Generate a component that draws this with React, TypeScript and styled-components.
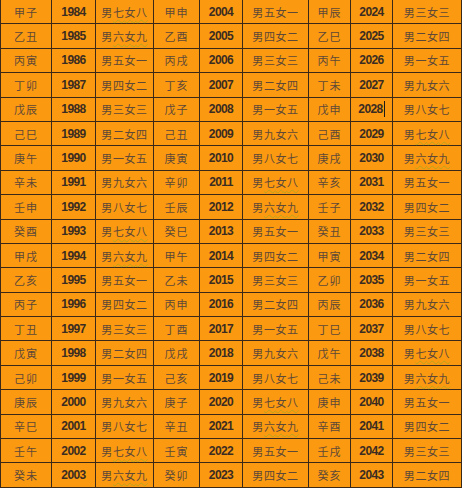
import React from "react";
import styled, { createGlobalStyle } from "styled-components";

const STEMS = "甲乙丙丁戊己庚辛壬癸";
const BRANCHES = "子丑寅卯辰巳午未申酉戌亥";
const PAIRS = [
  ["七", "八"],
  ["六", "九"],
  ["五", "一"],
  ["四", "二"],
  ["三", "三"],
  ["二", "四"],
  ["一", "五"],
  ["九", "六"],
  ["八", "七"],
];

const ganzhi = (year: number) =>
  STEMS[(year - 4) % 10] + BRANCHES[(year - 4) % 12];

type CellKind = "stem" | "year" | "ratio";

export default function App() {
  const rows = Array.from({ length: 20 }, (_, i) => i);
  const blocks = [1984, 2004, 2024];

  return (
    <>
      <GlobalStyle />
      <Table>
        {rows.map((i) =>
          blocks.map((start) => {
            const year = start + i;
            const [m, f] = PAIRS[(year - 1984) % 9];
            const squiggle = m === "七" || m === "六";
            return (
              <React.Fragment key={year}>
                <Cell $kind="stem">{ganzhi(year)}</Cell>
                <Cell $kind="year">
                  {year}
                  {year === 2028 && <Caret />}
                </Cell>
                <Cell $kind="ratio">
                  男
                  {squiggle ? (
                    <Squiggle>
                      {m}女{f}
                    </Squiggle>
                  ) : (
                    <>
                      {m}女{f}
                    </>
                  )}
                </Cell>
              </React.Fragment>
            );
          }),
        )}
      </Table>
    </>
  );
}

const GlobalStyle = createGlobalStyle`
  html, body {
    margin: 0;
    padding: 0;
    background: #ffffff;
  }
`;

const Table = styled.div`
  display: grid;
  grid-template-columns: 50px 43px 57px 45px 42px 65px 41px 41px 68px;
  grid-auto-rows: 23.4px;
  gap: 1px;
  padding: 0 1px 1px 1px;
  width: max-content;
  background: #3a2818;
`;

const Cell = styled.div<{ $kind: CellKind }>`
  display: flex;
  align-items: center;
  justify-content: center;
  background: #fb9a10;
  white-space: nowrap;
  font-family: ${(p) =>
    p.$kind === "year"
      ? `"Liberation Sans", Arial, sans-serif`
      : `"Noto Sans CJK SC", "Liberation Sans", sans-serif`};
  font-size: ${(p) => (p.$kind === "year" ? "12px" : "11px")};
  font-weight: ${(p) => (p.$kind === "year" ? 700 : 400)};
  letter-spacing: ${(p) =>
    p.$kind === "year" ? "-0.6px" : p.$kind === "ratio" ? "0.6px" : "1px"};
  color: ${(p) => (p.$kind === "year" ? "#3b2c22" : "#5e4838")};
`;

const Squiggle = styled.span`
  text-decoration: underline wavy #b9a41c;
  text-decoration-thickness: 1px;
  text-underline-offset: 2px;
`;

const Caret = styled.span`
  display: inline-block;
  width: 1px;
  height: 16px;
  margin-left: 1px;
  background: #1a1a1a;
`;
